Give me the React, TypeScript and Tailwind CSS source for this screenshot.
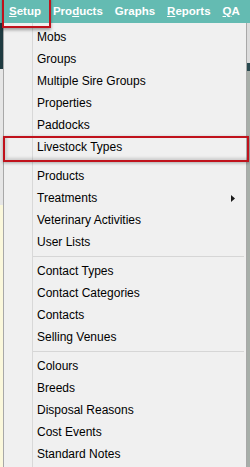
const groups: string[][] = [
  ["Mobs", "Groups", "Multiple Sire Groups", "Properties", "Paddocks", "Livestock Types"],
  ["Products", "Treatments", "Veterinary Activities", "User Lists"],
  ["Contact Types", "Contact Categories", "Contacts", "Selling Venues"],
  ["Colours", "Breeds", "Disposal Reasons", "Cost Events", "Standard Notes"],
]

function MenuItem({ label }: { label: string }) {
  const highlighted = label === "Livestock Types"
  return (
    <div className="relative flex h-[22px] items-center pl-[4px] pr-3">
      <span>{label}</span>
      {label === "Treatments" && (
        <svg className="absolute right-[11px] top-[8px]" width="4" height="7" viewBox="0 0 4 7">
          <path d="M0 0 L4 3.5 L0 7 Z" fill="#1a1a1a" />
        </svg>
      )}
      {highlighted && (
        <div className="pointer-events-none absolute left-[-30px] right-[-3px] top-0 h-[26px] border-[2.5px] border-[#c0121c] shadow-[inset_2px_-2px_3px_rgba(0,0,0,0.15),0_1px_3px_rgba(0,0,0,0.3)]" />
      )}
    </div>
  )
}

export default function App() {
  return (
    <div
      className="relative flex h-[467px] w-[250px] flex-col overflow-hidden bg-[#f0f0f0] text-[12px] text-black"
      style={{ fontFamily: '"Liberation Sans", Arial, sans-serif' }}
    >
      <header className="relative flex h-[23px] shrink-0 items-center gap-[12px] bg-[#64bbb2] pl-[9px] text-[11.5px] font-bold text-white">
        <span>
          <span className="underline">S</span>etup
        </span>
        <span>
          Pro<span className="underline">d</span>ucts
        </span>
        <span>Graphs</span>
        <span>
          <span className="underline">R</span>eports
        </span>
        <span>
          <span className="underline">Q</span>A
        </span>
        <div className="pointer-events-none absolute left-[2px] top-[-3px] h-[31px] w-[49px] border-[2.5px] border-[#c0121c] shadow-[0_2px_3px_rgba(0,0,0,0.35)]" />
      </header>

      <div className="flex min-h-0 flex-1">
        <div className="flex w-[3px] flex-col">
          <div className="h-[46px] bg-[#1f3b41]" />
          <div className="h-[136px] bg-[#e6e6e6]" />
          <div className="flex-1 bg-[#fbf8dc]" />
        </div>

        <div className="flex flex-1 border-x border-[#a8a8a8] bg-[#f0f0f0]">
          <div className="w-[29px] border-r border-[#d8d8d8]" />
          <div className="flex-1 pt-[3px]">
            {groups.map((g, i) => (
              <div key={i}>
                {i > 0 && (
                  <div className="flex h-[7px] items-center pr-[2px]">
                    <div className="h-px w-full bg-[#d6d6d6]" />
                  </div>
                )}
                {g.map((label) => (
                  <MenuItem key={label} label={label} />
                ))}
              </div>
            ))}
          </div>
        </div>

        <div className="flex w-[3px] flex-col bg-[#a9b0ae]">
          <div className="h-[40px] bg-[#dcdcdc]" />
          <div className="h-[8px] bg-[#2a4a50]" />
          <div className="flex-1 bg-[#a7aea9]" />
        </div>
      </div>
    </div>
  )
}
